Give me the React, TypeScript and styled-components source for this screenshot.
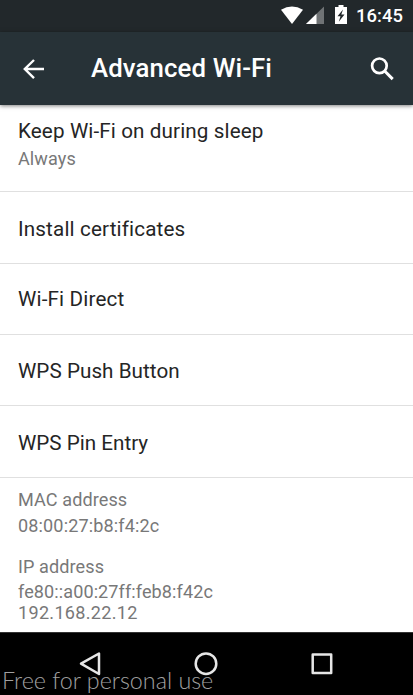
import React from "react";
import styled, { createGlobalStyle } from "styled-components";

const GlobalStyle = createGlobalStyle`
  * { box-sizing: border-box; }
  body { margin: 0; background: #fff; font-family: Roboto, sans-serif; }
`;

const Screen = styled.div`
  position: relative;
  width: 413px;
  height: 695px;
  display: flex;
  flex-direction: column;
  overflow: hidden;
  background: #fff;
`;

const StatusBar = styled.header`
  flex: none;
  height: 32px;
  display: flex;
  align-items: center;
  justify-content: flex-end;
  padding-right: 9px;
  background: #22282b;
  color: #fff;
`;

const StatusIcons = styled.svg`
  display: block;
  width: 70px;
  height: 32px;
  margin-right: 6px;
`;

const Clock = styled.span`
  width: 48px;
  font-size: 18.4px;
  font-weight: 500;
  line-height: 32px;
  letter-spacing: 0.1px;
  white-space: nowrap;
`;

const AppBar = styled.div`
  flex: none;
  z-index: 1;
  height: 73px;
  display: flex;
  align-items: center;
  padding: 0 18px 0 22px;
  background: #273237;
  color: #fff;
  box-shadow: 0 1px 4px rgba(0, 0, 0, 0.5);
`;

const Title = styled.h1`
  flex: 1;
  margin: 0 0 0 45px;
  font-size: 25.8px;
  font-weight: 500;
  line-height: 72px;
  height: 73px;
  letter-spacing: 0.1px;
  white-space: nowrap;
`;

const IconButton = styled.button`
  display: block;
  padding: 0;
  border: 0;
  background: none;
  color: inherit;
  svg { display: block; }
`;

const List = styled.main`
  flex: 1;
  min-height: 0;
`;

const Row = styled.div<{ $height: number; $top: number }>`
  height: ${(p) => p.$height}px;
  padding: ${(p) => p.$top}px 18px 0;
  border-bottom: 1px solid #e0e0e0;
`;

const Label = styled.div<{ $spacing: number }>`
  color: #252525;
  font-size: 20.65px;
  line-height: 28px;
  letter-spacing: ${(p) => p.$spacing}px;
  white-space: nowrap;
`;

const Summary = styled.div<{ $line?: number; $spacing?: number }>`
  color: #787878;
  font-size: 18.07px;
  line-height: ${(p) => p.$line ?? 26}px;
  letter-spacing: ${(p) => p.$spacing ?? 0.09}px;
  white-space: nowrap;
`;

const Info = styled.div<{ $height: number; $top: number }>`
  height: ${(p) => p.$height}px;
  padding: ${(p) => p.$top}px 18px 0;
`;

const NavBar = styled.nav`
  flex: none;
  height: 63px;
  display: flex;
  align-items: flex-start;
  justify-content: space-between;
  padding: 18px 79px 0 78px;
  background: #000;
  border-top: 1px solid #333;
`;

const Watermark = styled.div`
  position: absolute;
  left: 2px;
  bottom: 0;
  color: #a0a0a0;
  font-family: Lato, sans-serif;
  font-weight: 300;
  font-size: 23.3px;
  line-height: 30px;
  white-space: nowrap;
`;

const actions = [
  { label: "Install certificates", height: 72, top: 23, spacing: 0.15 },
  { label: "Wi-Fi Direct", height: 71, top: 21, spacing: 0.17 },
  { label: "WPS Push Button", height: 71, top: 22, spacing: 0.05 },
  { label: "WPS Pin Entry", height: 72, top: 23, spacing: 0 },
];

export default function App() {
  return (
    <>
      <GlobalStyle />
      <Screen>
        <StatusBar>
          <StatusIcons viewBox="280 0 70 32" fill="#fff">
            <path d="M281 9.8Q292 3 303 9.8L292 24Z" />
            <path d="M324 6.5V24H306Z" fillOpacity=".35" />
            <path d="M316.5 13.8V24H306Z" />
            <path
              fillRule="evenodd"
              d="M338.500 5h5v2H347v17H335V7h3.500ZM343 9.500l-5.500 6.800h3l-1.700 5.500 5.700-7.300h-3.200Z"
            />
          </StatusIcons>
          <Clock>16:45</Clock>
        </StatusBar>
        <AppBar>
          <IconButton aria-label="Back">
            <svg width="24" height="24" viewBox="0 0 24 24" fill="none" stroke="#fff" strokeWidth="2.4">
              <path d="M22 12H3M12 3 2.800 12l9.200 9.200" />
            </svg>
          </IconButton>
          <Title>Advanced Wi-Fi</Title>
          <IconButton aria-label="Search">
            <svg width="26" height="26" viewBox="0 0 26 26" fill="none" stroke="#fff" strokeWidth="2.7">
              <circle cx="10.400" cy="9.800" r="7.300" />
              <path d="M15.400 14.800l8.300 8.300" strokeWidth="3" />
            </svg>
          </IconButton>
        </AppBar>
        <List>
          <Row $height={87} $top={12}>
            <Label $spacing={0.12}>Keep Wi-Fi on during sleep</Label>
            <Summary $line={28}>Always</Summary>
          </Row>
          {actions.map((a) => (
            <Row key={a.label} $height={a.height} $top={a.top}>
              <Label $spacing={a.spacing}>{a.label}</Label>
            </Row>
          ))}
          <Info $height={67} $top={9}>
            <Summary>MAC address</Summary>
            <Summary $line={25} $spacing={0.13}>08:00:27:b8:f4:2c</Summary>
          </Info>
          <Info $height={87} $top={8}>
            <Summary $line={28}>IP address</Summary>
            <Summary $line={21}>fe80::a00:27ff:feb8:f42c</Summary>
            <Summary $line={21} $spacing={0.3}>192.168.22.12</Summary>
          </Info>
        </List>
        <NavBar>
          <IconButton aria-label="Back">
            <svg width="24" height="26" viewBox="0 0 24 26" fill="none" stroke="#e6e6e6" strokeWidth="2.500" strokeLinejoin="round">
              <path d="M21 2.500V23L3 12.700Z" />
            </svg>
          </IconButton>
          <IconButton aria-label="Home">
            <svg width="24" height="26" viewBox="0 0 24 26" fill="none" stroke="#e6e6e6" strokeWidth="2.500">
              <circle cx="12" cy="12.700" r="10.300" />
            </svg>
          </IconButton>
          <IconButton aria-label="Overview">
            <svg width="24" height="26" viewBox="0 0 24 26" fill="none" stroke="#e6e6e6" strokeWidth="2.500" strokeLinejoin="round">
              <rect x="2.700" y="3.500" width="18.500" height="18.500" />
            </svg>
          </IconButton>
        </NavBar>
        <Watermark>Free for personal use</Watermark>
      </Screen>
    </>
  );
}
